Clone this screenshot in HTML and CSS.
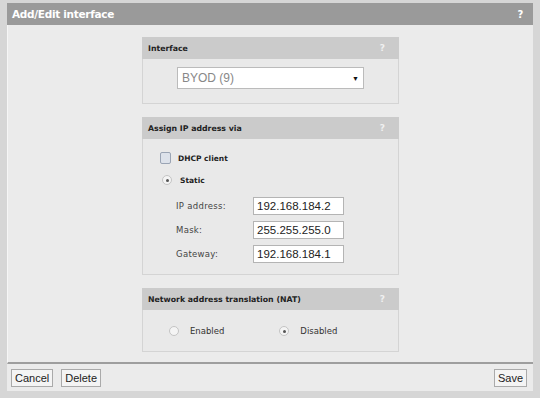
FILE: index.html
```html
<!DOCTYPE html>
<html lang="en">
<head>
    <meta charset="UTF-8">
    <title>Add/Edit interface</title>
    <link rel="stylesheet" href="styles.css">
</head>
<body>
<div class="dialog">
    <div class="titlebar">
        <span>Add/Edit interface</span>
        <span class="help">?</span>
    </div>

    <div class="content">

        <section class="panel">
            <div class="panel-head">Interface <span class="help">?</span></div>
            <div class="panel-body center">
                <div class="select">
                    <span>BYOD (9)</span>
                    <span class="arrow">&#9660;</span>
                </div>
            </div>
        </section>

        <section class="panel">
            <div class="panel-head">Assign IP address via <span class="help">?</span></div>
            <div class="panel-body assign">
                <div class="option"><span class="check"></span><b>DHCP client</b></div>
                <div class="option"><span class="radio on"></span><b>Static</b></div>
                <div class="fields">
                    <label>IP address:</label><div class="input">192.168.184.2</div>
                    <label>Mask:</label><div class="input">255.255.255.0</div>
                    <label>Gateway:</label><div class="input">192.168.184.1</div>
                </div>
            </div>
        </section>

        <section class="panel">
            <div class="panel-head">Network address translation (NAT) <span class="help">?</span></div>
            <div class="panel-body nat">
                <div class="option"><span class="radio"></span>Enabled</div>
                <div class="option"><span class="radio on"></span>Disabled</div>
            </div>
        </section>

    </div>

    <div class="footer">
        <button>Cancel</button>
        <button>Delete</button>
        <button class="right">Save</button>
    </div>
</div>
</body>
</html>
```

FILE: styles.css
```css
body {
    margin: 0;
    background-color: #d6d6d6;
    font-family: "DejaVu Sans", Verdana, sans-serif;
}

.dialog {
    margin: 3px 7px 0 7px;
    background-color: #ebebeb;
    height: 388px;
}

.titlebar {
    display: flex;
    justify-content: space-between;
    align-items: center;
    height: 22px;
    padding: 0 10px 0 5px;
    background-color: #9a9a9a;
    color: white;
    font-weight: bold;
    font-size: 10.5px;
    letter-spacing: -0.3px;
}

.titlebar .help {
    font-size: 10px;
}

.content {
    display: flex;
    flex-direction: column;
    align-items: center;
    gap: 13px;
    padding: 12px 0 12px 0;
    height: 313px;
    border-left: 1px solid #f6f6f6;
    border-bottom: 2px solid #9e9e9e;
}

.panel {
    width: 257px;
}

.panel-head {
    display: flex;
    justify-content: space-between;
    align-items: center;
    height: 22px;
    padding: 0 14px 0 6px;
    background-color: #cbcbcb;
    font-weight: bold;
    font-size: 7.8px;
    color: #222;
}

.panel-head .help {
    color: #f0f0f0;
    font-size: 9px;
}

.panel-body {
    border: 1px solid #d4d4d4;
    border-top: 0;
    background-color: #e9e9e9;
}

.center {
    display: flex;
    justify-content: center;
    padding: 8px 0 14px 0;
}

.select {
    display: flex;
    justify-content: space-between;
    align-items: center;
    width: 177px;
    height: 20px;
    padding: 0 4px;
    background-color: white;
    border: 1px solid #bbb;
    font-family: "Liberation Sans", Arial, sans-serif;
    font-size: 12px;
    color: #888;
}

.select .arrow {
    font-size: 7px;
    color: #111;
}

.option {
    display: flex;
    align-items: center;
    gap: 7px;
    font-size: 7.5px;
    color: #222;
}

.assign {
    padding: 13px 0 11px 17px;
    display: flex;
    flex-direction: column;
    gap: 11px;
}

.check {
    width: 9px;
    height: 10px;
    border: 1px solid #9aa4b4;
    border-radius: 2px;
    background-color: #dde2ea;
}

.radio {
    width: 8px;
    height: 8px;
    border: 1px solid #c4c4c4;
    border-radius: 50%;
    background-color: #f4f4f4;
    display: flex;
    align-items: center;
    justify-content: center;
    margin: 0 1px 0 2px;
}

.radio.on::after {
    content: "";
    width: 3px;
    height: 3px;
    border-radius: 50%;
    background-color: #555;
}

.fields {
    display: grid;
    grid-template-columns: 77px 91px;
    row-gap: 6px;
    align-items: center;
    margin-left: 16px;
    margin-top: 1px;
}

.fields label {
    font-size: 8.5px;
    color: #444;
    letter-spacing: 0.3px;
}

.input {
    height: 16px;
    line-height: 16px;
    padding: 0 3px;
    background-color: white;
    border: 1px solid #b4b4b4;
    font-family: "Liberation Sans", Arial, sans-serif;
    font-size: 11.5px;
    color: #222;
}

.nat {
    display: flex;
    gap: 53px;
    padding: 16px 0 15px 24px;
}

.nat .option {
    gap: 10px;
    font-size: 8.5px;
    color: #333;
}

.footer {
    display: flex;
    gap: 8px;
    padding: 5px 6px 0 4px;
    height: 24px;
}

.footer button {
    height: 18px;
    padding: 0 3px;
    background-color: #f4f4f4;
    border: 1px solid #aaa;
    font-family: "Liberation Sans", Arial, sans-serif;
    font-size: 11px;
    color: #222;
}

.footer .right {
    margin-left: auto;
}
```
